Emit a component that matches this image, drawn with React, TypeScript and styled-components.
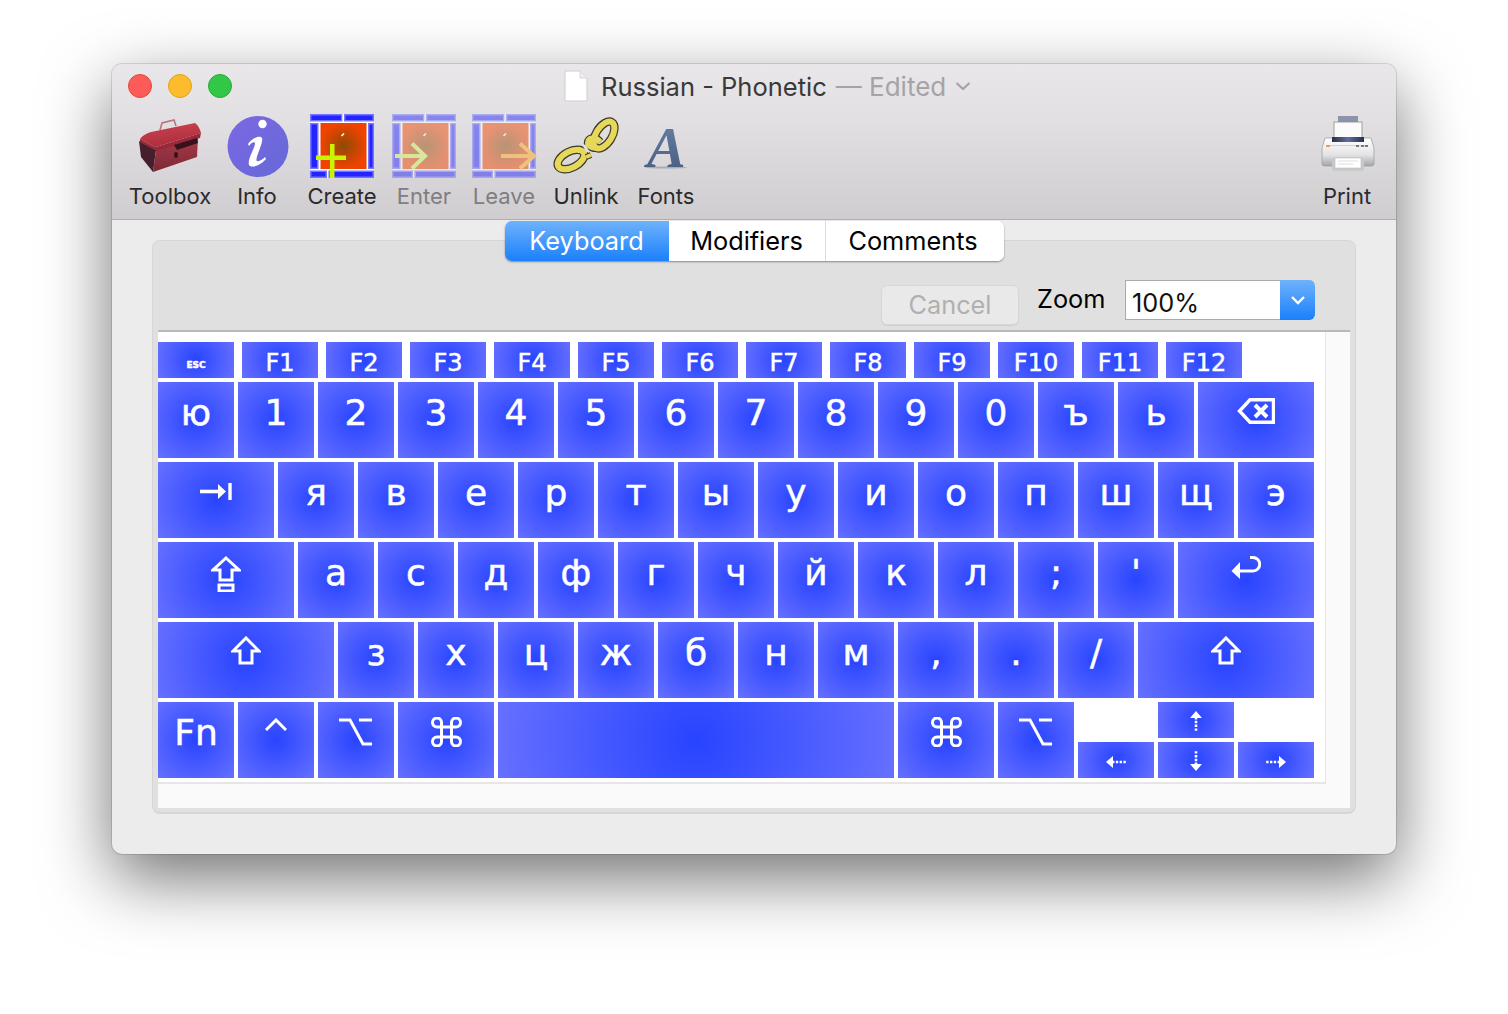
import React from "react";
import styled, { createGlobalStyle } from "styled-components";

const Global = createGlobalStyle`
  html, body { margin: 0; padding: 0; background: #fff; overflow: hidden; }
  #root { width: 1508px; height: 1014px; }
`;

const UI = `"Inter", "Roboto", "Liberation Sans", sans-serif`;
const KEYFONT = `"DejaVu Sans", "Noto Sans", sans-serif`;

const Page = styled.div`
  width: 1508px;
  height: 1014px;
  padding: 64px 0 0 112px;
  box-sizing: border-box;
  overflow: hidden;
`;
const Win = styled.div`
  width: 1284px;
  height: 790px;
  border-radius: 10px;
  background: #ececec;
  box-shadow: 0 0 0 1px rgba(0, 0, 0, 0.12), 0 24px 68px rgba(0, 0, 0, 0.56);
  display: flex;
  flex-direction: column;
  overflow: hidden;
  font-family: ${UI};
`;
const Head = styled.header`
  height: 156px;
  box-sizing: border-box;
  background: linear-gradient(#e9e7e9, #e2e0e2 35%, #cfcdcf);
  border-bottom: 1px solid #b0aeb0;
  display: flex;
  flex-direction: column;
`;
const TitleBar = styled.div`
  height: 44px;
  margin-bottom: 6px;
  display: flex;
  align-items: center;
  padding-left: 16px;
`;
const Light = styled.span<{ $c: string; $b: string }>`
  width: 24px;
  height: 24px;
  box-sizing: border-box;
  border-radius: 50%;
  background: ${(p) => p.$c};
  border: 1px solid ${(p) => p.$b};
  margin-right: 16px;
`;
const Title = styled.div`
  margin-left: 316px;
  display: flex;
  align-items: center;
  font-size: 25.5px;
  color: #3a3838;
  white-space: nowrap;
`;
const DocIcon = styled.svg`
  width: 24px;
  height: 32px;
  margin-right: 13px;
`;
const Edited = styled.span`
  color: #a5a3a5;
  margin-left: 9px;
  font-size: 26px;
`;
const Chevron = styled.svg`
  width: 16px;
  height: 10px;
  margin-left: 9px;
`;
const Tools = styled.div`
  display: flex;
  padding: 0 17px 0 16px;
`;
const Tool = styled.div<{ $w: number }>`
  width: ${(p) => p.$w}px;
  display: flex;
  flex-direction: column;
  align-items: center;
`;
const ToolIcon = styled.svg`
  width: 64px;
  height: 64px;
  display: block;
  overflow: visible;
`;
const ToolLabel = styled.span<{ $off?: boolean }>`
  margin-top: 4px;
  font-size: 22px;
  line-height: 28px;
  color: ${(p) => (p.$off ? "#807e80" : "#2b2a2c")};
  white-space: nowrap;
`;
const Push = styled.div`
  flex: 1;
`;
const Body = styled.main`
  flex: 1;
  padding: 20px 40px 0;
`;
const Panel = styled.section`
  height: 574px;
  box-sizing: border-box;
  border: 1px solid #d6d6d6;
  border-bottom-width: 2px;
  border-radius: 8px;
  background: #e0e0e0;
  padding: 0 5px;
  display: flex;
  flex-direction: column;
`;
const Tabs = styled.nav`
  align-self: center;
  margin-top: -20px;
  display: flex;
  height: 40px;
  border-radius: 7px;
  background: #fff;
  box-shadow: 0 1px 2px rgba(0, 0, 0, 0.4);
  overflow: hidden;
`;
const Tab = styled.div<{ $on?: boolean; $w: number }>`
  width: ${(p) => p.$w}px;
  box-sizing: border-box;
  padding-bottom: 2px;
  display: flex;
  align-items: center;
  justify-content: center;
  font-size: 25.3px;
  color: ${(p) => (p.$on ? "#fff" : "#000")};
  background: ${(p) => (p.$on ? "linear-gradient(#6fb2fb, #1a80fb)" : "#fff")};
  border-right: ${(p) => (p.$on ? "0" : "1px solid #dcdcdc")};
  &:last-child { border-right: 0; padding-right: 3px; }
`;
const ZoomRow = styled.div`
  height: 40px;
  margin: 19px 0 10px;
  padding-right: 35px;
  display: flex;
  justify-content: flex-end;
  align-items: flex-start;
`;
const Cancel = styled.button`
  width: 138px;
  height: 40px;
  margin: 5px 18px 0 0;
  padding: 0 0 2px;
  border: 1px solid #d8d8d8;
  border-radius: 6px;
  background: #e9e9e9;
  box-shadow: 0 1px 1px rgba(0, 0, 0, 0.08);
  color: #b0b0b0;
  font: 25.3px ${UI};
`;
const ZoomLabel = styled.span`
  width: 68px;
  margin-right: 20px;
  font-size: 25.3px;
  line-height: 38px;
  color: #000;
`;
const Select = styled.div`
  width: 190px;
  height: 40px;
  box-sizing: border-box;
  display: flex;
  background: #fff;
  border: 1px solid #aaa;
  border-right: 0;
  border-radius: 0 6px 6px 0;
`;
const SelectText = styled.span`
  flex: 1;
  padding: 3px 0 0 6px;
  font-size: 25.3px;
  line-height: 38px;
  color: #111;
`;
const SelectBtn = styled.span`
  width: 35px;
  margin: -1px 0;
  border-radius: 0 6px 6px 0;
  background: linear-gradient(#6fb2fb, #1a80fb);
  display: flex;
  align-items: center;
  justify-content: center;
`;
const Scroller = styled.div`
  height: 478px;
  box-sizing: border-box;
  border-top: 2px solid #b9b9b9;
  background: #fafafa;
`;
const Sheet = styled.div`
  width: 1168px;
  height: 452px;
  box-sizing: border-box;
  padding-top: 10px;
  background: #fff;
  border-right: 1px solid #e6e6e6;
  border-bottom: 2px solid #e6e6e6;
  display: flex;
  flex-direction: column;
  gap: 4px;
`;
const Row = styled.div<{ $gap?: number }>`
  display: flex;
  gap: ${(p) => p.$gap ?? 4}px;
`;
const Key = styled.div<{ $w?: number; $h?: number; $top?: number; $size?: number }>`
  width: ${(p) => p.$w ?? 76}px;
  height: ${(p) => p.$h ?? 76}px;
  box-sizing: border-box;
  padding-top: ${(p) => p.$top ?? 13}px;
  display: flex;
  justify-content: center;
  align-items: flex-start;
  background: radial-gradient(circle farthest-corner at 50% 50%, #2844ff, #6670ff);
  color: #fff;
  font-family: ${KEYFONT};
  font-size: ${(p) => p.$size ?? 36}px;
  line-height: 36px;
  -webkit-text-stroke: 0.5px #fff;
`;
const EscLabel = styled.b`
  font-size: 9px;
  line-height: 9px;
`;
const Arrows = styled.div`
  display: grid;
  grid-template-columns: repeat(3, 76px);
  grid-auto-rows: 36px;
  gap: 4px;
`;
const Glyph = styled.svg`
  display: block;
  fill: none;
  stroke: #fff;
  stroke-width: 3;
`;

const Shift = () => (
  <Glyph width="30" height="29" viewBox="0 0 30 29">
    <path d="M15 2 L28 15 H21 V27 H9 V15 H2 Z" />
  </Glyph>
);
const Caps = () => (
  <Glyph width="30" height="36" viewBox="0 0 30 36">
    <path d="M15 2 L28 14 H21 V24 H9 V14 H2 Z" />
    <rect x="8" y="29" width="14" height="6" />
  </Glyph>
);
const Ctrl = () => (
  <Glyph width="22" height="14" viewBox="0 0 22 14">
    <path d="M1 12 L11 2 L21 12" />
  </Glyph>
);
const Opt = () => (
  <Glyph width="34" height="28" viewBox="0 0 34 28">
    <path d="M0 2 H11 L24 26 H33 M20 2 H33" />
  </Glyph>
);
const Cmd = () => (
  <Glyph width="31" height="30" viewBox="0 0 30 30">
    <path d="M10 10 H20 V20 H10 Z M10 10 H5.5 A4.5 4.5 0 1 1 10 5.5 Z M20 10 V5.5 A4.5 4.5 0 1 1 24.5 10 Z M10 20 V24.5 A4.5 4.5 0 1 1 5.5 20 Z M20 20 H24.5 A4.5 4.5 0 1 1 20 24.5 Z" />
  </Glyph>
);
const Del = () => (
  <Glyph width="38" height="26" viewBox="0 0 38 26">
    <path d="M36.5 1.8 H13 L2.5 13 L13 24.2 H36.5 Z" strokeWidth="3.4" />
    <path d="M18 7 L30 19 M30 7 L18 19" strokeWidth="4" />
  </Glyph>
);
const TabGlyph = () => (
  <Glyph width="32" height="17" viewBox="0 0 32 17">
    <path d="M0 8.5 H18" strokeWidth="3.6" />
    <path d="M18 1 L26 8.5 L18 16 Z" fill="#fff" stroke="none" />
    <path d="M30 0 V17" strokeWidth="3.4" />
  </Glyph>
);
const Ret = () => (
  <Glyph width="30" height="24" viewBox="0 0 30 24">
    <path d="M19 1.5 H22 A6.5 6.5 0 0 1 22 15 H8" />
    <path d="M9 6 L0.5 15 L9 23 Z" fill="#fff" stroke="none" />
  </Glyph>
);
const Dotted = ({ r = 0 }: { r?: number }) => (
  <Glyph width="20" height="20" viewBox="0 0 20 20">
    <g transform={`rotate(${r} 10 10)`}>
      <path d="M10 6 V20" strokeWidth="2.6" strokeDasharray="2.4 1.4" />
      <path d="M4 7 L10 0 L16 7 Z" fill="#fff" stroke="none" />
    </g>
  </Glyph>
);

const Cell = ({ x, y, w, h }: { x: number; y: number; w: number; h: number }) => (
  <rect x={x + 0.75} y={y + 0.75} width={w - 1.5} height={h - 1.5} fill="#2424ff" stroke="#7474ff" strokeWidth="1.5" />
);
const Frame = ({ split }: { split: number }) => (
  <g>
    <defs>
      <radialGradient id="core">
        <stop offset="0" stopColor="#8f4a05" />
        <stop offset="1" stopColor="#f04300" />
      </radialGradient>
    </defs>
    <rect x="0" y="7" width="64" height="50" fill="#fff" />
    <Cell x={0} y={0} w={32.5} h={7.5} />
    <rect x="32.5" y="0" width="1.5" height="8" fill="#fff" />
    <Cell x={34} y={0} w={30} h={7.5} />
    <Cell x={0} y={9} w={8.5} h={46} />
    <Cell x={58} y={9} w={6} h={46} />
    <Cell x={0} y={56.5} w={split} h={7.5} />
    <rect x={split} y="56" width="1.5" height="8" fill="#fff" />
    <Cell x={split + 1.5} y={56.5} w={62.5 - split} h={7.5} />
    <rect x="10.5" y="9" width="46" height="46" fill="url(#core)" />
    <path d="M31.5 22 L34 19.5" stroke="#fff" strokeWidth="1.6" />
  </g>
);

const Toolbox = () => (
  <ToolIcon viewBox="0 0 64 64">
    <defs>
      <linearGradient id="lid" x1="0" y1="0" x2="0.3" y2="1">
        <stop offset="0" stopColor="#cc4452" />
        <stop offset="1" stopColor="#ae2e3c" />
      </linearGradient>
      <linearGradient id="front" x1="0" y1="0" x2="0" y2="1">
        <stop offset="0" stopColor="#a83a48" />
        <stop offset="1" stopColor="#7c2836" />
      </linearGradient>
    </defs>
    <path d="M22 16 L24 9 L36 6 L38 12" fill="none" stroke="#b7757c" strokeWidth="1.6" />
    <path d="M1 27 L18 36 L15 58 L3 43 Z" fill="#45202c" />
    <path d="M18 36 L60 24 L59 43 L15 58 Z" fill="url(#front)" />
    <path d="M2 25 C5 21 9 19 13 18 L57 9 C60 11 62 15 63 19 L18 33 C12 31 6 27 2 25 Z" fill="url(#lid)" />
    <path d="M2 25 C6 27 12 31 18 33 L63 19 L62 24 L19 37 L2 28 Z" fill="#98283a" />
    <path d="M36 31 L59 24 L60 29 L39 36 Z" fill="#38121a" />
    <ellipse cx="38" cy="41" rx="2" ry="3" fill="#3c1219" />
  </ToolIcon>
);
const Info = () => (
  <ToolIcon viewBox="0 0 64 64">
    <defs>
      <linearGradient id="inf" x1="0" y1="0" x2="1" y2="1">
        <stop offset="0" stopColor="#7d68e2" />
        <stop offset="1" stopColor="#6568d8" />
      </linearGradient>
    </defs>
    <circle cx="33" cy="32.5" r="30.5" fill="url(#inf)" />
    <circle cx="37.5" cy="10" r="4.2" fill="#fff" />
    <path d="M23 30 C27 24 35 21 37 24 C39 28 29 46 32 47 C34 48 38 45 40 43 L41 45 C37 50 29 54 25 52 C20 49 31 32 30 29 C29 27 26 29 24 32 Z" fill="#fff" />
  </ToolIcon>
);
const Create = () => (
  <ToolIcon viewBox="0 0 64 64">
    <Frame split={17} />
    <rect x="6" y="41.5" width="30" height="4.5" fill="#c8f500" />
    <rect x="20" y="30" width="4.5" height="34" fill="#c8f500" />
  </ToolIcon>
);
const Ghost = styled.g`
  opacity: 0.48;
`;
const Enter = () => (
  <ToolIcon viewBox="0 0 64 64">
    <Ghost><Frame split={21} /></Ghost>
    <path d="M3 42 H33 M20 29.5 L33 42 L20 54.5" fill="none" stroke="#d6e69a" strokeWidth="4" />
  </ToolIcon>
);
const Leave = () => (
  <ToolIcon viewBox="0 0 64 64">
    <Ghost><Frame split={21} /></Ghost>
    <path d="M29 42 H62 M48 29.5 L62 42 L48 54.5" fill="none" stroke="#eec27c" strokeWidth="4" />
  </ToolIcon>
);
const Unlink = () => (
  <ToolIcon viewBox="0 0 64 64">
    <g fill="none">
      <g stroke="#3c3a26" strokeWidth="8.4">
        <ellipse cx="17" cy="45.5" rx="14.5" ry="8" transform="rotate(-28 17 45.5)" />
        <ellipse cx="50" cy="21" rx="15" ry="8" transform="rotate(-58 50 21)" />
        <path d="M46 28 C41 22 34 24 34 29 C35 33 41 35 44 33" />
      </g>
      <g stroke="#e6d85a" strokeWidth="6">
        <ellipse cx="17" cy="45.5" rx="14.5" ry="8" transform="rotate(-28 17 45.5)" />
        <ellipse cx="50" cy="21" rx="15" ry="8" transform="rotate(-58 50 21)" />
        <path d="M46 28 C41 22 34 24 34 29 C35 33 41 35 44 33" />
      </g>
      <path d="M30 31 L34 38" stroke="#e2e0e2" strokeWidth="3" />
      <path d="M32 43 L37 41" stroke="#3c3a26" strokeWidth="6" />
      <path d="M32 43 L37 41" stroke="#e6d85a" strokeWidth="4" />
    </g>
  </ToolIcon>
);
const FontMark = styled.text`
  font-family: "Liberation Serif", serif;
  font-style: italic;
  font-weight: 700;
  font-size: 58px;
  fill: url(#slate);
`;
const Fonts = () => (
  <ToolIcon viewBox="0 0 64 64">
    <defs>
      <linearGradient id="slate" x1="0" y1="0" x2="0" y2="1">
        <stop offset="0" stopColor="#6a84a8" />
        <stop offset="1" stopColor="#44587c" />
      </linearGradient>
    </defs>
    <ellipse cx="32" cy="53.5" rx="21" ry="1" fill="rgba(60,70,90,.3)" />
    <FontMark x="13" y="53">A</FontMark>
  </ToolIcon>
);
const Printer = () => (
  <ToolIcon viewBox="0 0 64 64">
    <defs>
      <linearGradient id="pb" x1="0" y1="0" x2="0" y2="1">
        <stop offset="0" stopColor="#fff" />
        <stop offset="0.6" stopColor="#e4e4e6" />
        <stop offset="1" stopColor="#a4a4a8" />
      </linearGradient>
      <linearGradient id="ps" x1="0" y1="0" x2="1" y2="0">
        <stop offset="0" stopColor="#2a3146" />
        <stop offset="0.5" stopColor="#5f6f9e" />
        <stop offset="1" stopColor="#2a3146" />
      </linearGradient>
    </defs>
    <rect x="23" y="2" width="20" height="7" fill="#8c93ad" />
    <rect x="19" y="8" width="28" height="18" fill="#fbfbfc" stroke="#8d8d92" strokeWidth="0.8" />
    <path d="M10 24 H56 L59 34 V50 Q59 52 56 52 H10 Q7 52 7 50 V34 Z" fill="url(#pb)" stroke="#a0a0a4" strokeWidth="0.8" />
    <rect x="17" y="23" width="32" height="5" fill="url(#ps)" />
    <path d="M13 31.5 H53" stroke="#d0d0d4" strokeWidth="1" />
    <rect x="11" y="31" width="4" height="2" fill="#e8a040" />
    <rect x="41" y="31" width="3" height="2" fill="#777" />
    <rect x="46" y="31" width="3" height="2" fill="#777" />
    <rect x="50" y="31" width="3" height="2" fill="#777" />
    <path d="M17 44 H49 V55 Q49 57 47 57 H19 Q17 57 17 55 Z" fill="#c9c9cc" />
    <rect x="20" y="44" width="26" height="10" fill="#fff" stroke="#bbb" strokeWidth="0.6" />
    <path d="M23 47 H43 M23 50 H38" stroke="#ddd" strokeWidth="1" />
  </ToolIcon>
);

const row2 = ["1", "2", "3", "4", "5", "6", "7", "8", "9", "0", "ъ", "ь"];
const row3 = ["я", "в", "е", "р", "т", "ы", "у", "и", "о", "п", "ш", "щ", "э"];
const row4 = ["а", "с", "д", "ф", "г", "ч", "й", "к", "л", ";", "'"];
const row5 = ["з", "х", "ц", "ж", "б", "н", "м", ",", ".", "/"];
const fkeys = ["F1", "F2", "F3", "F4", "F5", "F6", "F7", "F8", "F9", "F10", "F11", "F12"];
const tools: [number, string, React.ComponentType, boolean?][] = [
  [84, "Toolbox", Toolbox],
  [90, "Info", Info],
  [80, "Create", Create],
  [84, "Enter", Enter, true],
  [76, "Leave", Leave, true],
  [88, "Unlink", Unlink],
  [72, "Fonts", Fonts],
];

export default function App() {
  return (
    <Page>
      <Global />
      <Win>
        <Head>
          <TitleBar>
            <Light $c="#fc5b57" $b="#e2463f" />
            <Light $c="#fdbc2e" $b="#e1a116" />
            <Light $c="#33c748" $b="#27aa35" />
            <Title>
              <DocIcon viewBox="0 0 24 32">
                <path d="M1 1 H16 L23 8 V31 H1 Z" fill="#fff" stroke="#cfcdcf" />
                <path d="M16 1 V8 H23" fill="#eee" stroke="#d8d6d8" />
              </DocIcon>
              Russian - Phonetic
              <Edited>— Edited</Edited>
              <Chevron viewBox="0 0 16 10">
                <path d="M1.5 2 L8 8 L14.5 2" fill="none" stroke="#a5a3a5" strokeWidth="2.2" />
              </Chevron>
            </Title>
          </TitleBar>
          <Tools>
            {tools.map(([w, label, Icon, off]) => (
              <Tool key={label} $w={w}>
                <Icon />
                <ToolLabel $off={off}>{label}</ToolLabel>
              </Tool>
            ))}
            <Push />
            <Tool $w={64}>
              <Printer />
              <ToolLabel>Print</ToolLabel>
            </Tool>
          </Tools>
        </Head>
        <Body>
          <Panel>
            <Tabs>
              <Tab $on $w={164}>Keyboard</Tab>
              <Tab $w={157}>Modifiers</Tab>
              <Tab $w={178}>Comments</Tab>
            </Tabs>
            <ZoomRow>
              <Cancel>Cancel</Cancel>
              <ZoomLabel>Zoom</ZoomLabel>
              <Select>
                <SelectText>100%</SelectText>
                <SelectBtn>
                  <svg width="16" height="10" viewBox="0 0 16 10">
                    <path d="M2 2 L8 8 L14 2" fill="none" stroke="#fff" strokeWidth="2.4" />
                  </svg>
                </SelectBtn>
              </Select>
            </ZoomRow>
            <Scroller>
              <Sheet>
                <Row $gap={8}>
                  <Key $h={36} $top={19}><EscLabel>ESC</EscLabel></Key>
                  {fkeys.map((k) => (
                    <Key key={k} $h={36} $top={3} $size={24}>{k}</Key>
                  ))}
                </Row>
                <Row>
                  <Key>ю</Key>
                  {row2.map((k) => <Key key={k}>{k}</Key>)}
                  <Key $w={116} $top={16}><Del /></Key>
                </Row>
                <Row>
                  <Key $w={116} $top={21}><TabGlyph /></Key>
                  {row3.map((k) => <Key key={k}>{k}</Key>)}
                </Row>
                <Row>
                  <Key $w={136} $top={14}><Caps /></Key>
                  {row4.map((k) => <Key key={k}>{k}</Key>)}
                  <Key $w={136} $top={14}><Ret /></Key>
                </Row>
                <Row>
                  <Key $w={176} $top={14}><Shift /></Key>
                  {row5.map((k) => <Key key={k}>{k}</Key>)}
                  <Key $w={176} $top={14}><Shift /></Key>
                </Row>
                <Row>
                  <Key>Fn</Key>
                  <Key $top={16}><Ctrl /></Key>
                  <Key $top={16}><Opt /></Key>
                  <Key $w={96} $top={15}><Cmd /></Key>
                  <Key $w={396} />
                  <Key $w={96} $top={15}><Cmd /></Key>
                  <Key $top={16}><Opt /></Key>
                  <Arrows>
                    <span />
                    <Key $h={36} $top={9}><Dotted /></Key>
                    <span />
                    <Key $h={36} $top={10}><Dotted r={-90} /></Key>
                    <Key $h={36} $top={9}><Dotted r={180} /></Key>
                    <Key $h={36} $top={10}><Dotted r={90} /></Key>
                  </Arrows>
                </Row>
              </Sheet>
            </Scroller>
          </Panel>
        </Body>
      </Win>
    </Page>
  );
}
